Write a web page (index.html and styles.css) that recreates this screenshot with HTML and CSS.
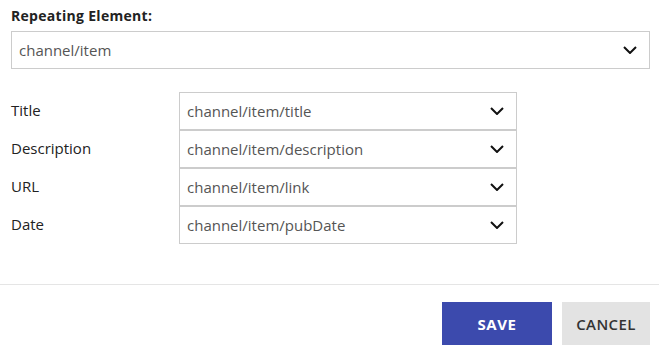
FILE: index.html
```html
<!DOCTYPE html>
<html lang="en">
<head>
    <meta charset="UTF-8">
    <title>Feed Mapping</title>
    <link rel="stylesheet" href="styles.css">
</head>
<body>
    <div class="panel">
        <div class="field-label">Repeating Element:</div>
        <div class="select-box">
            <span>channel/item</span>
            <svg class="chevron" viewBox="0 0 14 8"><path d="M1 1l6 6 6-6"/></svg>
        </div>

        <div class="mapping">
            <div class="map-label">Title</div>
            <div class="select-box">
                <span>channel/item/title</span>
                <svg class="chevron" viewBox="0 0 14 8"><path d="M1 1l6 6 6-6"/></svg>
            </div>
            <div class="map-label">Description</div>
            <div class="select-box">
                <span>channel/item/description</span>
                <svg class="chevron" viewBox="0 0 14 8"><path d="M1 1l6 6 6-6"/></svg>
            </div>
            <div class="map-label">URL</div>
            <div class="select-box">
                <span>channel/item/link</span>
                <svg class="chevron" viewBox="0 0 14 8"><path d="M1 1l6 6 6-6"/></svg>
            </div>
            <div class="map-label">Date</div>
            <div class="select-box">
                <span>channel/item/pubDate</span>
                <svg class="chevron" viewBox="0 0 14 8"><path d="M1 1l6 6 6-6"/></svg>
            </div>
        </div>
    </div>

    <div class="footer">
        <button class="btn btn-save">Save</button>
        <button class="btn btn-cancel">Cancel</button>
    </div>
</body>
</html>
```

FILE: styles.css
```css
body {
    margin: 0;
    background: #fff;
    font-family: 'Open Sans', Arial, sans-serif;
    color: #222;
}
.panel {
    padding: 6px 9px 0 11px;
}
.field-label {
    font-size: 14px;
    font-weight: 700;
    letter-spacing: 0.3px;
    line-height: 19px;
    margin-bottom: 6px;
}
.select-box {
    box-sizing: border-box;
    height: 38px;
    border: 1px solid #ccc;
    display: flex;
    align-items: center;
    justify-content: space-between;
    padding: 0 12px 0 7px;
    font-size: 15px;
    color: #555;
}
.chevron {
    width: 14px;
    height: 8px;
    fill: none;
    stroke: #111;
    stroke-width: 2;
}
.mapping {
    margin-top: 23px;
    display: grid;
    grid-template-columns: 168px 338px;
    grid-auto-rows: 38px;
}
.map-label {
    display: flex;
    align-items: center;
    font-size: 15px;
    margin-top: -3px;
}
.footer {
    margin-top: 40px;
    border-top: 1px solid #e5e5e5;
    padding: 17px 9px 0 0;
    display: flex;
    justify-content: flex-end;
    gap: 10px;
}
.btn {
    border: none;
    height: 43px;
    font-family: 'Open Sans', Arial, sans-serif;
    font-size: 15px;
    text-transform: uppercase;
    cursor: pointer;
}
.btn-save {
    width: 110px;
    background: #3c4aad;
    color: #fff;
    font-weight: 700;
    letter-spacing: 0.6px;
}
.btn-cancel {
    width: 88px;
    background: #e3e3e3;
    color: #333;
    font-weight: 600;
    letter-spacing: 0.4px;
}
```
